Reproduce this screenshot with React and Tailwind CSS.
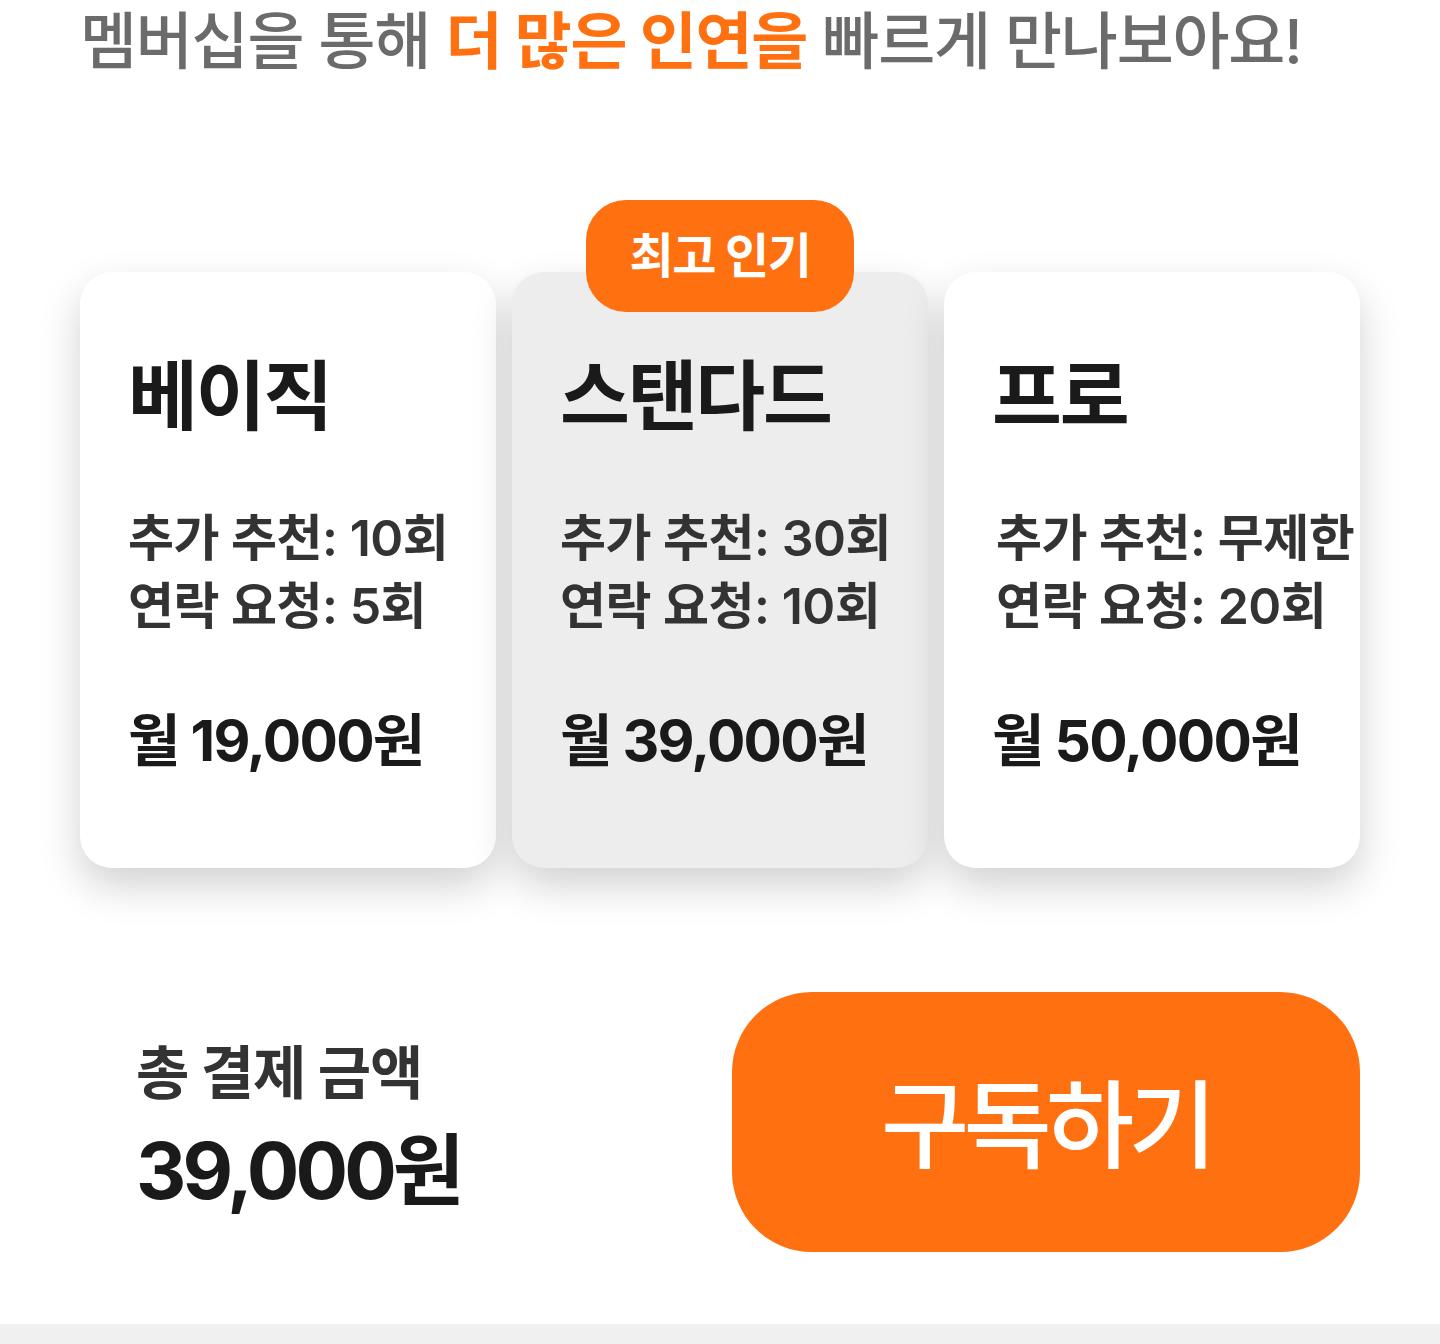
const plans = [
  {
    name: "베이직",
    lines: ["추가 추천: 10회", "연락 요청: 5회"],
    price: "월 19,000원",
  },
  {
    name: "스탠다드",
    lines: ["추가 추천: 30회", "연락 요청: 10회"],
    price: "월 39,000원",
    popular: true,
  },
  {
    name: "프로",
    lines: ["추가 추천: 무제한", "연락 요청: 20회"],
    price: "월 50,000원",
    indent: true,
  },
];

function PlanCard({ plan }) {
  return (
    <div
      className={
        "relative flex-1 h-[596px] rounded-[32px] shadow-[0_18px_40px_rgba(0,0,0,0.18)] pt-[86px] pl-[48px] " +
        (plan.popular ? "bg-[#ededed]" : "bg-white")
      }
    >
      {plan.popular && (
        <div className="absolute -top-[72px] left-1/2 -translate-x-1/2 w-[268px] h-[112px] rounded-[40px] bg-[#ff7010] flex justify-center pt-[32px]">
          <span className="text-white text-[48px] font-bold leading-none tracking-[-0.03em]">
            최고 인기
          </span>
        </div>
      )}
      <h2 className="text-[76px] font-bold leading-none text-[#1a1a1a] tracking-[-0.03em]">
        {plan.name}
      </h2>
      <div
        className={
          "mt-[70px] text-[50px] font-semibold leading-[68px] text-[#333333] tracking-[-0.01em] " +
          (plan.indent ? "pl-1" : "")
        }
      >
        {plan.lines.map((l) => (
          <p key={l}>{l}</p>
        ))}
      </div>
      <p className="mt-[72px] text-[57px] font-bold leading-none text-[#1a1a1a] tracking-[-0.03em]">
        {plan.price}
      </p>
    </div>
  );
}

function App() {
  return (
    <div
      className="w-[1440px] min-h-[1344px] bg-white flex flex-col"
      style={{ fontFamily: '"Inter", "Noto Sans CJK KR", sans-serif' }}
    >
      <h1 className="pt-[6px] pl-[80px] text-[62px] font-medium leading-[72px] text-[#6b6b6b] tracking-[-0.02em] whitespace-nowrap">
        멤버십을 통해 <span className="text-[#ff7010] font-bold">더 많은 인연을</span> 빠르게 만나보아요!
      </h1>
      <section className="flex gap-4 px-20 mt-[194px]">
        {plans.map((p) => (
          <PlanCard key={p.name} plan={p} />
        ))}
      </section>
      <section className="flex items-center justify-between px-20 mt-[124px] pb-[72px]">
        <div className="pl-[56px] pt-[10px]">
          <p className="text-[58px] font-bold leading-none text-[#333333] tracking-[-0.02em]">
            총 결제 금액
          </p>
          <p className="mt-[30px] text-[78px] font-bold leading-none text-[#1a1a1a] tracking-[-0.05em]">
            39,000원
          </p>
        </div>
        <button className="w-[628px] h-[260px] rounded-[80px] bg-[#ff7010] text-white text-[96px] font-medium leading-none tracking-[-0.06em] pt-[6px]">
          구독하기
        </button>
      </section>
      <div className="flex-1 min-h-[20px] bg-[#f0f0f0]" />
    </div>
  );
}

export default App;
